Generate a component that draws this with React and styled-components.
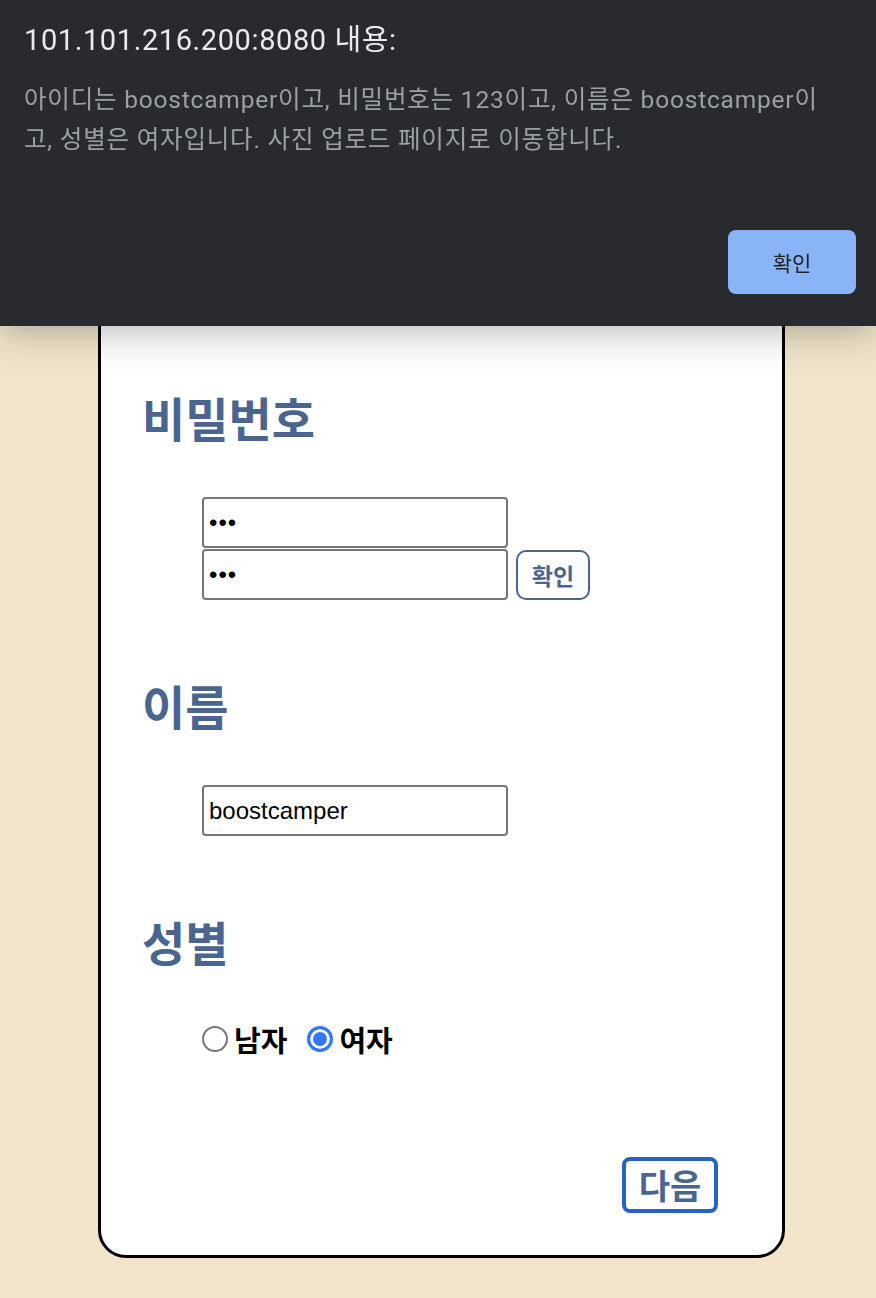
import styled, { createGlobalStyle } from "styled-components";

const GlobalStyle = createGlobalStyle`
  body {
    margin: 0;
    background: #f2e4cb;
    font-family: "Roboto", "Noto Sans CJK KR", sans-serif;
  }
`;

const Page = styled.div`
  min-height: 1298px;
  padding-top: 240px;
  box-sizing: border-box;
`;

// alert dialog lying over the page
const Dialog = styled.div`
  position: fixed;
  top: 0;
  left: 0;
  right: 0;
  height: 326px;
  box-sizing: border-box;
  padding: 20px 24px 32px 24px;
  background: #292a2d;
  box-shadow: 0 6px 36px rgba(0, 0, 0, 0.28);
  display: flex;
  flex-direction: column;
  z-index: 10;
`;

const DialogTitle = styled.h2`
  margin: 0;
  font-family: "Roboto", "Noto Sans CJK KR", sans-serif;
  font-size: 29px;
  font-weight: 400;
  letter-spacing: 0.6px;
  line-height: 40px;
  color: #e8eaed;
`;

const DialogText = styled.p`
  margin: 20px 0 0 0;
  font-size: 24.5px;
  letter-spacing: 0.8px;
  line-height: 40px;
  color: #9aa0a6;
  white-space: nowrap;
`;

const DialogActions = styled.div`
  margin-top: auto;
  display: flex;
  justify-content: flex-end;
`;

const DialogButton = styled.button`
  width: 128px;
  height: 64px;
  margin-right: -4px;
  border: none;
  border-radius: 8px;
  background: #8ab4f8;
  color: #202124;
  font-family: "Roboto", "Noto Sans CJK KR", sans-serif;
  font-size: 21px;
`;

const Card = styled.main`
  margin-left: 98px;
  width: 687px;
  box-sizing: border-box;
  background: #fff;
  border: 3px solid #000;
  border-radius: 0 0 28px 28px;
  padding: 146px 64px 42px 41px;
  display: flex;
  flex-direction: column;
`;

const Section = styled.section`
  display: flex;
  flex-direction: column;
  margin-bottom: ${(p) => p.$gap ?? 77}px;
`;

const Heading = styled.h2`
  margin: 0 0 52px 0;
  font-family: "Noto Sans CJK KR", sans-serif;
  font-size: 47px;
  font-weight: 700;
  line-height: 56px;
  color: #4a6590;
`;

const Fields = styled.div`
  padding-left: 60px;
  display: flex;
  flex-direction: column;
  gap: 1px;
`;

const Row = styled.div`
  display: flex;
  align-items: flex-end;
  gap: 8px;
`;

const Input = styled.input`
  width: 306px;
  height: 51px;
  box-sizing: border-box;
  border: 2px solid #767676;
  border-radius: 4px;
  padding: 0 5px;
  font-family: "Liberation Sans", Arial, sans-serif;
  font-size: 24px;
  color: #000;
  outline: none;
  &[type="password"] {
    letter-spacing: 1px;
  }
`;

const SmallButton = styled.button`
  width: 74px;
  height: 50px;
  box-sizing: border-box;
  background: #fff;
  border: 2px solid #4a6590;
  border-radius: 10px;
  color: #4a6590;
  font-family: "Noto Sans CJK KR", sans-serif;
  font-size: 23px;
  font-weight: 700;
  padding: 0;
`;

const RadioRow = styled.div`
  padding-left: 60px;
  display: flex;
  align-items: center;
  gap: 20px;
  height: 36px;
`;

const RadioLabel = styled.label`
  display: flex;
  align-items: center;
  gap: 6px;
  font-family: "Noto Sans CJK KR", sans-serif;
  font-size: 29px;
  font-weight: 700;
  color: #000;
`;

const Radio = styled.input`
  appearance: none;
  margin: 0;
  width: 26px;
  height: 26px;
  border-radius: 50%;
  border: 2px solid #767676;
  background: #fff;
  box-sizing: border-box;
  &:checked {
    border: 3px solid #3478f6;
    background: #3478f6;
    box-shadow: inset 0 0 0 3px #fff;
  }
`;

const Footer = styled.div`
  display: flex;
  justify-content: flex-end;
  margin-top: 100px;
`;

const NextButton = styled.button`
  width: 96px;
  height: 56px;
  box-sizing: border-box;
  background: #fff;
  border: 4px solid #2563c9;
  border-radius: 8px;
  color: #4a6590;
  font-family: "Noto Sans CJK KR", sans-serif;
  font-size: 34px;
  font-weight: 700;
  padding: 0;
  line-height: 1;
`;

export default function App() {
  return (
    <>
      <GlobalStyle />
      <Page>
        <Dialog>
          <DialogTitle>101.101.216.200:8080 내용:</DialogTitle>
          <DialogText>
            아이디는 boostcamper이고, 비밀번호는 123이고, 이름은 boostcamper이
            <br />
            고, 성별은 여자입니다. 사진 업로드 페이지로 이동합니다.
          </DialogText>
          <DialogActions>
            <DialogButton>확인</DialogButton>
          </DialogActions>
        </Dialog>
        <Card>
          <Section>
            <Heading>비밀번호</Heading>
            <Fields>
              <Input type="password" defaultValue="123" />
              <Row>
                <Input type="password" defaultValue="123" />
                <SmallButton>확인</SmallButton>
              </Row>
            </Fields>
          </Section>
          <Section>
            <Heading>이름</Heading>
            <Fields>
              <Input type="text" defaultValue="boostcamper" />
            </Fields>
          </Section>
          <Section $gap={0}>
            <Heading>성별</Heading>
            <RadioRow>
              <RadioLabel>
                <Radio type="radio" name="gender" />
                남자
              </RadioLabel>
              <RadioLabel>
                <Radio type="radio" name="gender" defaultChecked />
                여자
              </RadioLabel>
            </RadioRow>
          </Section>
          <Footer>
            <NextButton>다음</NextButton>
          </Footer>
        </Card>
      </Page>
    </>
  );
}
